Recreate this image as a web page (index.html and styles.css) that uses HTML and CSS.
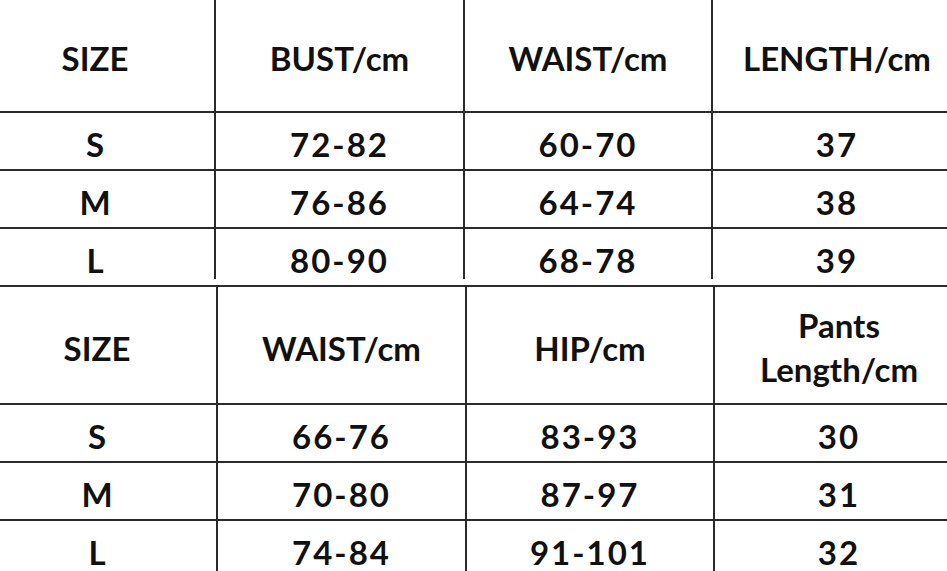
FILE: index.html
```html
<!DOCTYPE html>
<html>
<head>
<meta charset="utf-8">
<link rel="stylesheet" href="styles.css">
</head>
<body>
<div class="sheet">
  <div class="chart chart-top">
    <div class="row head">
      <div class="cell">SIZE</div>
      <div class="cell">BUST/cm</div>
      <div class="cell">WAIST/cm</div>
      <div class="cell">LENGTH/cm</div>
    </div>
    <div class="row">
      <div class="cell">S</div>
      <div class="cell num">72-82</div>
      <div class="cell num">60-70</div>
      <div class="cell num">37</div>
    </div>
    <div class="row">
      <div class="cell">M</div>
      <div class="cell num">76-86</div>
      <div class="cell num">64-74</div>
      <div class="cell num">38</div>
    </div>
    <div class="row last">
      <div class="cell">L</div>
      <div class="cell num">80-90</div>
      <div class="cell num">68-78</div>
      <div class="cell num">39</div>
    </div>
  </div>
  <div class="chart chart-bottom">
    <div class="row head">
      <div class="cell">SIZE</div>
      <div class="cell">WAIST/cm</div>
      <div class="cell">HIP/cm</div>
      <div class="cell two">Pants<br>Length/cm</div>
    </div>
    <div class="row">
      <div class="cell">S</div>
      <div class="cell num">66-76</div>
      <div class="cell num">83-93</div>
      <div class="cell num">30</div>
    </div>
    <div class="row">
      <div class="cell">M</div>
      <div class="cell num">70-80</div>
      <div class="cell num">87-97</div>
      <div class="cell num">31</div>
    </div>
    <div class="row">
      <div class="cell">L</div>
      <div class="cell num">74-84</div>
      <div class="cell num">91-101</div>
      <div class="cell num">32</div>
    </div>
  </div>
</div>
</body>
</html>
```

FILE: styles.css
```css
html, body {
  margin: 0;
  padding: 0;
  background: #ffffff;
  overflow: hidden;
  width: 947px;
  height: 571px;
}

.sheet {
  width: 1000px;
  font-family: Lato, "Liberation Sans", sans-serif;
  font-weight: 700;
  font-size: 33px;
  color: #111111;
}

.chart-top {
  margin-left: -24px;
}

.chart-bottom {
  margin-left: -22px;
  margin-top: 6px;
  border-top: 2px solid #2a2a2a;
}

.row {
  display: grid;
  grid-template-columns: 240px 249px 248px 248px;
  border-bottom: 2px solid #2a2a2a;
}

.chart-top .row.head {
  height: 111px;
}

.chart-top .row {
  height: 56px;
}

.chart-top .row.last {
  height: 50px;
  border-bottom: none;
}

.chart-top .row.last .cell {
  padding-top: 12px;
}

.chart-bottom .row.head {
  height: 116px;
}

.chart-bottom .row {
  height: 56px;
}

.cell {
  display: flex;
  align-items: center;
  justify-content: center;
  text-align: center;
  border-right: 2px solid #2a2a2a;
  line-height: 1;
  padding-top: 6px;
  box-sizing: border-box;
}

.cell:last-child {
  border-right: none;
}

.cell.two {
  line-height: 44px;
  padding-top: 4px;
}

.num {
  letter-spacing: 2px;
}
```
